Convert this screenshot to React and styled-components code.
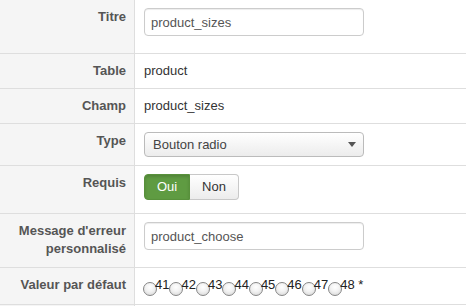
import React from "react";
import styled, { createGlobalStyle } from "styled-components";

const Global = createGlobalStyle`
  html, body { margin: 0; padding: 0; background: #fff; }
  body { font-family: "Liberation Sans", Helvetica, Arial, sans-serif; font-size: 13px; color: #333; }
`;

const Table = styled.div`
  width: 466px;
  height: 306px;
  overflow: hidden;
  display: flex;
  flex-direction: column;
`;

const Row = styled.div`
  display: grid;
  grid-template-columns: 135px 1fr;
  border-bottom: 1px solid #dedede;
  flex: ${(p) => (p.$fill ? "1 1 auto" : "0 0 auto")};
`;

const Label = styled.div`
  background: #f5f5f5;
  border-right: 1px solid #dedede;
  text-align: right;
  padding: 8px 8px 8px 8px;
  font-weight: bold;
  font-size: 13px;
  line-height: 18px;
  color: #555;
`;

const Cell = styled.div`
  padding: 8px 8px 8px 9px;
  font-size: 13px;
  line-height: 18px;
  color: #333;
  display: flex;
  align-items: flex-start;
`;

const TextInput = styled.input`
  box-sizing: border-box;
  width: 220px;
  height: 28px;
  margin: 0 0 9px 0;
  padding: 0 6px;
  border: 1px solid #ccc;
  border-radius: 4px;
  box-shadow: inset 0 1px 1px rgba(0, 0, 0, 0.075);
  font-family: "Liberation Sans", Helvetica, Arial, sans-serif;
  font-size: 13px;
  color: #555;
  background: #fff;
  outline: none;
`;

const Select = styled.div`
  box-sizing: border-box;
  width: 220px;
  height: 25px;
  border: 1px solid #bbb;
  border-radius: 4px;
  background: linear-gradient(#ffffff, #ececec);
  display: flex;
  align-items: center;
  justify-content: space-between;
  padding: 0 7px 0 8px;
  font-size: 13px;
  color: #444;
`;

const Caret = styled.span`
  width: 0;
  height: 0;
  border-left: 4px solid transparent;
  border-right: 4px solid transparent;
  border-top: 5px solid #555;
`;

const Toggle = styled.div`
  display: flex;
  margin-bottom: 5px;
`;

const ToggleButton = styled.div`
  box-sizing: border-box;
  height: 26px;
  width: ${(p) => p.$w}px;
  display: flex;
  align-items: center;
  justify-content: center;
  font-size: 13px;
  border: 1px solid ${(p) => (p.$active ? "#58913b" : "#c8c8c8")};
  background: ${(p) => (p.$active ? "#5f9b42" : "linear-gradient(#ffffff, #ececec)")};
  color: ${(p) => (p.$active ? "#fff" : "#333")};
  box-shadow: ${(p) => (p.$active ? "inset 0 2px 3px rgba(0,0,0,0.15)" : "none")};
  border-radius: ${(p) => (p.$first ? "4px 0 0 4px" : "0 4px 4px 0")};
  border-left-width: ${(p) => (p.$first ? "1px" : "0")};
`;

const Radios = styled.div`
  display: flex;
  align-items: flex-start;
  margin-left: -1px;
`;

const RadioItem = styled.label`
  display: flex;
  align-items: flex-start;
`;

const Circle = styled.span`
  box-sizing: border-box;
  width: 14px;
  height: 14px;
  margin-top: 6px;
  margin-right: -2px;
  border-radius: 50%;
  border: 1px solid #858585;
  background: radial-gradient(circle at 50% 35%, #ffffff 0%, #f2f2f2 45%, #d2d2d2 100%);
`;

const Num = styled.span`
  color: #222;
`;

const sizes = ["41", "42", "43", "44", "45", "46", "47", "48"];

export default function App() {
  return (
    <>
      <Global />
      <Table>
        <Row>
          <Label>Titre</Label>
          <Cell>
            <TextInput readOnly value="product_sizes" />
          </Cell>
        </Row>
        <Row>
          <Label>Table</Label>
          <Cell>product</Cell>
        </Row>
        <Row>
          <Label>Champ</Label>
          <Cell>product_sizes</Cell>
        </Row>
        <Row>
          <Label>Type</Label>
          <Cell>
            <Select>
              <span>Bouton radio</span>
              <Caret />
            </Select>
          </Cell>
        </Row>
        <Row>
          <Label>Requis</Label>
          <Cell>
            <Toggle>
              <ToggleButton $active $first $w={46}>Oui</ToggleButton>
              <ToggleButton $w={49}>Non</ToggleButton>
            </Toggle>
          </Cell>
        </Row>
        <Row>
          <Label>Message d'erreur personnalisé</Label>
          <Cell>
            <TextInput readOnly value="product_choose" />
          </Cell>
        </Row>
        <Row>
          <Label>Valeur par défaut</Label>
          <Cell>
            <Radios>
              {sizes.map((s, i) => (
                <RadioItem key={s}>
                  <Circle />
                  <Num>{s}{i === sizes.length - 1 ? " *" : ""}</Num>
                </RadioItem>
              ))}
            </Radios>
          </Cell>
        </Row>
        <Row $fill>
          <Label />
          <Cell />
        </Row>
      </Table>
    </>
  );
}
